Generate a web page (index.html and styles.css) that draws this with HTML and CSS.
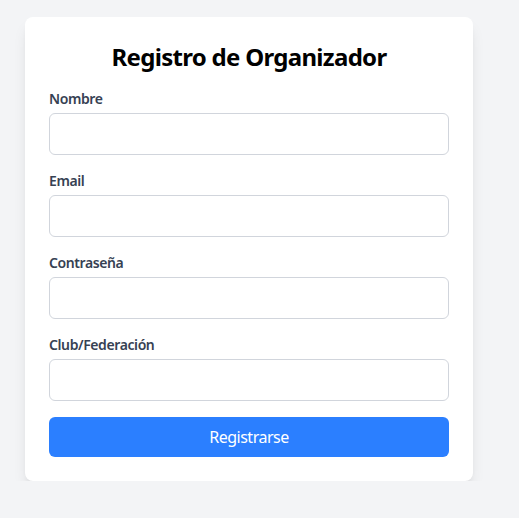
FILE: index.html
```html
<!DOCTYPE html>
<html lang="es">
<head>
<meta charset="utf-8">
<title>Registro de Organizador</title>
<link rel="stylesheet" href="styles.css">
</head>
<body>
<div class="page">
  <form class="card">
    <h1 class="title">Registro de Organizador</h1>
    <div class="field">
      <label class="label">Nombre</label>
      <input class="input" type="text">
    </div>
    <div class="field">
      <label class="label">Email</label>
      <input class="input" type="email">
    </div>
    <div class="field">
      <label class="label">Contraseña</label>
      <input class="input" type="password">
    </div>
    <div class="field">
      <label class="label">Club/Federación</label>
      <input class="input" type="text">
    </div>
    <button class="button" type="button">Registrarse</button>
  </form>
</div>
</body>
</html>
```
FILE: styles.css
```css
* { box-sizing: border-box; }
html, body {
  margin: 0;
  padding: 0;
  background: #f3f4f6;
  font-family: "Noto Sans", "Open Sans", sans-serif;
}
.page {
  padding: 17px 0 0 25px;
}
.card {
  width: 448px;
  background: #ffffff;
  border-radius: 8px;
  padding: 24px;
  box-shadow: 0 10px 15px -3px rgba(0,0,0,0.1), 0 4px 6px -4px rgba(0,0,0,0.1);
  display: flex;
  flex-direction: column;
}
.title {
  margin: 0 0 16px 0;
  font-size: 24px;
  line-height: 32px;
  font-weight: 700;
  text-align: center;
  color: #000;
  letter-spacing: -0.7px;
}
.field {
  display: flex;
  flex-direction: column;
  margin-bottom: 16px;
}
.label {
  font-size: 14px;
  line-height: 20px;
  font-weight: 600;
  color: #364153;
  margin-bottom: 4px;
  letter-spacing: -0.4px;
}
.input {
  height: 42px;
  border: 1px solid #d1d5dc;
  border-radius: 6px;
  padding: 8px 12px;
  font: inherit;
  background: #fff;
}
.button {
  height: 40px;
  border: none;
  border-radius: 6px;
  background: #2b7fff;
  color: #fff;
  font: inherit;
  font-size: 16px;
  letter-spacing: -0.5px;
}
```
